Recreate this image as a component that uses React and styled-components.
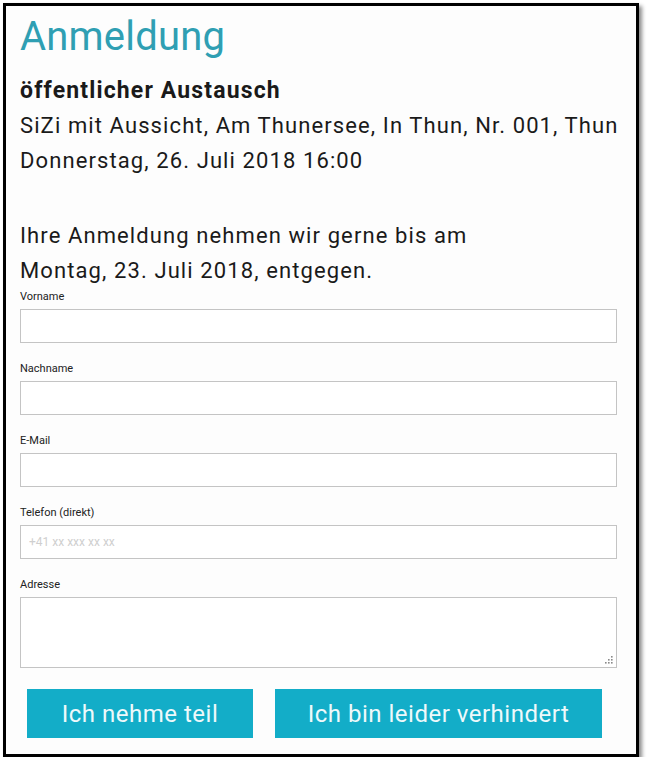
import React from "react";
import styled, { createGlobalStyle } from "styled-components";

const GlobalStyle = createGlobalStyle`
  html, body {
    margin: 0;
    padding: 0;
    background: #ffffff;
  }
`;

const Frame = styled.div`
  box-sizing: border-box;
  width: 636px;
  height: 754px;
  margin: 3px 0 0 3px;
  border: 3px solid #000;
  background: #fdfdfd;
  box-shadow: 3px 3px 4px rgba(0, 0, 0, 0.45);
  padding: 6px 20px 0 14px;
  font-family: "Roboto", "DejaVu Sans", sans-serif;
  color: #1a1a1a;
`;

const Title = styled.h1`
  margin: 0;
  font-size: 40px;
  font-weight: 400;
  line-height: 50px;
  color: #2f9fb3;
  letter-spacing: 0.2px;
`;

const Info = styled.div`
  margin-top: 11px;
  font-size: 22px;
  line-height: 35px;
  letter-spacing: 1.1px;
  white-space: nowrap;
`;

const Strong = styled.div`
  font-size: 23px;
  font-weight: 700;
  letter-spacing: 1.15px;
`;

const Gap = styled.div`
  height: 40px;
`;

const Form = styled.form`
  display: flex;
  flex-direction: column;
  margin-top: 2px;
`;

const Field = styled.div`
  display: flex;
  flex-direction: column;
  margin-bottom: 19px;
`;

const Label = styled.label`
  font-size: 11px;
  line-height: 13px;
  color: #222;
  margin-bottom: 6px;
`;

const Input = styled.input`
  box-sizing: border-box;
  height: 34px;
  width: 597px;
  border: 1px solid #c4c4c4;
  background: #fff;
  padding: 0 8px;
  font-family: inherit;
  font-size: 12px;
  outline: none;

  &::placeholder {
    color: #cfcfcf;
  }
`;

const AreaWrap = styled.div`
  position: relative;
  width: 597px;
  height: 71px;
`;

const TextArea = styled.textarea`
  box-sizing: border-box;
  display: block;
  height: 71px;
  width: 597px;
  border: 1px solid #c4c4c4;
  background: #fff;
  font-family: inherit;
  outline: none;
  resize: none;
`;

const Grip = styled.svg`
  position: absolute;
  right: 4px;
  bottom: 4px;
  pointer-events: none;
`;

const Buttons = styled.div`
  display: flex;
  gap: 22px;
  padding-left: 7px;
  margin-top: 2px;
`;

const Button = styled.button`
  box-sizing: border-box;
  width: ${(p) => p.$w}px;
  height: 49px;
  border: none;
  background: #13adc8;
  color: #eef9fb;
  font-family: "Roboto", "DejaVu Sans", sans-serif;
  font-size: 24px;
  letter-spacing: 0.5px;
  cursor: pointer;
`;

const fields = [
  { label: "Vorname" },
  { label: "Nachname" },
  { label: "E-Mail" },
  { label: "Telefon (direkt)", placeholder: "+41 xx xxx xx xx" },
];

export default function App() {
  return (
    <>
      <GlobalStyle />
      <Frame>
        <Title>Anmeldung</Title>
        <Info>
          <Strong>öffentlicher Austausch</Strong>
          <div>SiZi mit Aussicht, Am Thunersee, In Thun, Nr. 001, Thun</div>
          <div>Donnerstag, 26. Juli 2018 16:00</div>
          <Gap />
          <div>Ihre Anmeldung nehmen wir gerne bis am</div>
          <div>Montag, 23. Juli 2018, entgegen.</div>
        </Info>
        <Form onSubmit={(e) => e.preventDefault()}>
          {fields.map((f) => (
            <Field key={f.label}>
              <Label>{f.label}</Label>
              <Input type="text" placeholder={f.placeholder || ""} />
            </Field>
          ))}
          <Field>
            <Label>Adresse</Label>
            <AreaWrap>
              <TextArea />
              <Grip width="9" height="9" viewBox="0 0 9 9">
                <g fill="#8a8a8a">
                  <rect x="7" y="1" width="1.6" height="1.6" />
                  <rect x="4" y="4" width="1.6" height="1.6" />
                  <rect x="7" y="4" width="1.6" height="1.6" />
                  <rect x="1" y="7" width="1.6" height="1.6" />
                  <rect x="4" y="7" width="1.6" height="1.6" />
                  <rect x="7" y="7" width="1.6" height="1.6" />
                </g>
              </Grip>
            </AreaWrap>
          </Field>
          <Buttons>
            <Button type="button" $w={226}>Ich nehme teil</Button>
            <Button type="button" $w={327}>Ich bin leider verhindert</Button>
          </Buttons>
        </Form>
      </Frame>
    </>
  );
}
